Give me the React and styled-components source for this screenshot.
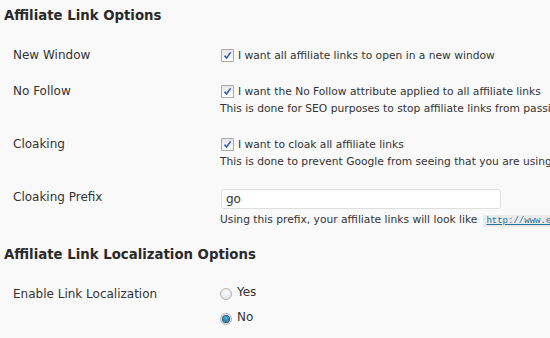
import React from 'react';
import styled, { createGlobalStyle } from 'styled-components';

const GlobalStyle = createGlobalStyle`
  html, body {
    margin: 0;
    padding: 0;
    background: #f9f9f9;
    overflow: hidden;
  }
  body {
    font-family: "DejaVu Sans", Verdana, sans-serif;
    color: #333;
  }
`;

const Page = styled.div`
  width: 550px;
  height: 338px;
  overflow: hidden;
  white-space: nowrap;
`;

const Heading = styled.h3`
  margin: 7px 0 12px;
  padding-left: 4px;
  font-size: 13.3px;
  line-height: 18px;
  font-weight: bold;
  color: #2a2a2a;
`;

const FormTable = styled.div`
  display: grid;
  grid-template-columns: 220px 1fr;
`;

const Label = styled.div`
  padding: 10px 0 9px 13px;
  font-size: 12px;
  line-height: 17px;
`;

const Field = styled.div`
  padding: 10px 0 9px;
  font-size: 10.7px;
  line-height: 17px;
  display: flex;
  flex-direction: column;
`;

const CheckRow = styled.label`
  display: flex;
  align-items: center;
  gap: 4px;
  padding-left: 1px;
`;

const Box = styled.span`
  width: 11px;
  height: 11px;
  border: 1px solid #aaa;
  border-radius: 1px;
  background: linear-gradient(#e6e6e6, #ffffff);
  display: flex;
  align-items: center;
  justify-content: center;
  flex-shrink: 0;
`;

const Description = styled.span`
  color: #333;
`;

const TextInput = styled.input`
  box-sizing: border-box;
  width: 280px;
  height: 20px;
  margin: 0 0 2px 1px;
  padding: 0 4px;
  border: 1px solid #dfdfdf;
  border-radius: 3px;
  background: #fff;
  font-family: "DejaVu Sans", Verdana, sans-serif;
  font-size: 12px;
  color: #333;
  outline: none;
`;

const Code = styled.code`
  margin-left: 6px;
  padding: 1px 3px;
  background: #eaeaea;
  font-family: "Liberation Mono", "DejaVu Sans Mono", monospace;
  font-size: 9px;
`;

const CodeLink = styled.a`
  color: #21759b;
  text-decoration: underline;
`;

const RadioList = styled.div`
  display: flex;
  flex-direction: column;
  gap: 8px;
  margin-top: -2px;
  font-size: 12px;
  line-height: 17px;
`;

const RadioRow = styled.label`
  display: flex;
  align-items: center;
  gap: 5px;
`;

const RadioDot = styled.span`
  box-sizing: border-box;
  width: 12px;
  height: 12px;
  margin-top: 3px;
  border-radius: 50%;
  border: 1px solid #b4b4b4;
  background: radial-gradient(circle at 50% 35%, #ffffff, #dcdcdc);
  display: flex;
  align-items: center;
  justify-content: center;
  flex-shrink: 0;

  &::after {
    content: '';
    display: ${({ $checked }) => ($checked ? 'block' : 'none')};
    width: 6px;
    height: 6px;
    border-radius: 50%;
    background: radial-gradient(circle at 50% 40%, #4fb3e8, #0b5c8a);
    box-shadow: 0 0 0 1px #1a4f73;
  }
`;

const Check = () => (
  <Box>
    <svg width="9" height="9" viewBox="0 0 9 9">
      <path d="M1.5 4.6 L3.6 7 L7.6 1.4" fill="none" stroke="#3a58b5" strokeWidth="1.6" />
    </svg>
  </Box>
);

const CheckOption = ({ children }) => (
  <CheckRow>
    <Check />
    <span>{children}</span>
  </CheckRow>
);

const App = () => (
  <Page>
    <GlobalStyle />
    <Heading>Affiliate Link Options</Heading>
    <FormTable>
      <Label>New Window</Label>
      <Field>
        <CheckOption>I want all affiliate links to open in a new window</CheckOption>
      </Field>

      <Label>No Follow</Label>
      <Field>
        <CheckOption>I want the No Follow attribute applied to all affiliate links</CheckOption>
        <Description>This is done for SEO purposes to stop affiliate links from passing link juice.</Description>
      </Field>

      <Label>Cloaking</Label>
      <Field>
        <CheckOption>I want to cloak all affiliate links</CheckOption>
        <Description>This is done to prevent Google from seeing that you are using affiliate links.</Description>
      </Field>

      <Label>Cloaking Prefix</Label>
      <Field>
        <TextInput defaultValue="go" />
        <Description>
          Using this prefix, your affiliate links will look like
          <Code>
            <CodeLink href="#">http://www.example.com/go/affiliate-link/</CodeLink>
          </Code>
        </Description>
      </Field>
    </FormTable>

    <Heading>Affiliate Link Localization Options</Heading>
    <FormTable>
      <Label>Enable Link Localization</Label>
      <Field>
        <RadioList>
          <RadioRow>
            <RadioDot />
            <span>Yes</span>
          </RadioRow>
          <RadioRow>
            <RadioDot $checked />
            <span>No</span>
          </RadioRow>
        </RadioList>
      </Field>
    </FormTable>
  </Page>
);

export default App;
